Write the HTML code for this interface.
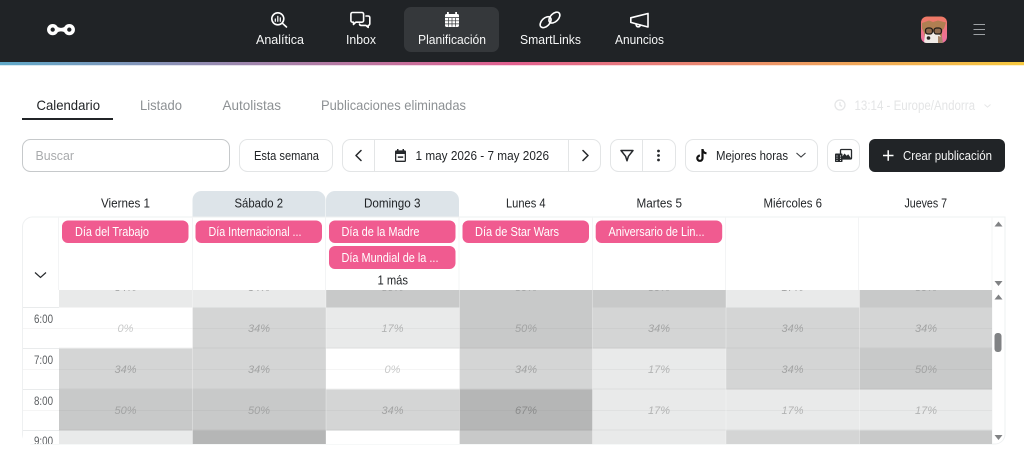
<!DOCTYPE html>
<html><head><meta charset="utf-8"><style>
html,body{margin:0;padding:0;background:#fff;width:1024px;height:454px;overflow:hidden}
svg{display:block}
text{font-family:"Liberation Sans",sans-serif;font-size:13px;fill:#26292c}
.n{font-size:13px;fill:#f6f7f7}
.tab{font-size:14px;fill:#8d9194}
.tb{font-size:12.5px;fill:#1f2225}
.d{font-size:13px;fill:#1f2225}
.p{font-size:13px;fill:#fff}
.pc{font-size:11px;font-style:italic;fill:#a2a3a3;text-anchor:middle}
.t{font-size:11.5px;fill:#5a5d60}
.ln{fill:none;stroke:#fff;stroke-width:1.6;stroke-linecap:round;stroke-linejoin:round}
.ic{fill:none;stroke:#26292c;stroke-width:1.5;stroke-linecap:round;stroke-linejoin:round}
</style></head><body>
<svg width="1024" height="454" viewBox="0 0 1024 454" xmlns="http://www.w3.org/2000/svg">
<defs>
<linearGradient id="g" x1="0" x2="1" y1="0" y2="0"><stop offset="0" stop-color="#5fa9c9"/><stop offset=".5" stop-color="#e2608f"/><stop offset="1" stop-color="#f6c93f"/></linearGradient>
<linearGradient id="av" x1="0" x2="0" y1="0" y2="1"><stop offset="0" stop-color="#ee7a62"/><stop offset="1" stop-color="#ee6fa5"/></linearGradient>
<clipPath id="grid"><rect x="23" y="290" width="969" height="154"/></clipPath>
<clipPath id="avc"><rect x="921" y="16.5" width="26" height="26.5" rx="6"/></clipPath>
</defs>

<!-- Top bar -->
<rect width="1024" height="62" fill="#202326"/>
<rect y="62" width="1024" height="3" fill="url(#g)"/>
<rect y="65" width="1024" height="1" fill="url(#g)" opacity=".25"/>
<!-- logo -->
<g fill="none" stroke="#fff" stroke-width="3.5"><circle cx="52.7" cy="29.6" r="3.9"/><circle cx="69.3" cy="29.6" r="3.9"/></g>
<path d="M56 26.3C60 28.4 62 28.4 66 26.3V32.9C62 30.8 60 30.8 56 32.9z" fill="#fff"/>
<!-- active nav -->
<rect x="404" y="7" width="95" height="45" rx="7" fill="#35383b"/>
<!-- analitica -->
<g class="ln"><circle cx="277.8" cy="18.8" r="6"/><path d="M282.3 23.2L286.5 27"/><path d="M275.3 21.3v-2.3M277.8 21.3v-5M280.3 21.3v-3.5" stroke-width="1.2"/></g>
<!-- inbox -->
<g class="ln"><path d="M352.5 12.5h9.5a1.6 1.6 0 0 1 1.6 1.6v6.5a1.6 1.6 0 0 1-1.6 1.6h-6.2l-2.3 2.2v-2.2h-1a1.6 1.6 0 0 1-1.6-1.6v-6.5a1.6 1.6 0 0 1 1.6-1.6z"/><path d="M366 16h2.2a1.6 1.6 0 0 1 1.6 1.6v6.2a1.6 1.6 0 0 1-1.6 1.6v2l-2.3-2h-4.8a1.6 1.6 0 0 1-1.6-1.4"/></g>
<!-- calendar -->
<path fill="#fff" d="M447 12h1.8v2h6.4v-2h1.8v2h.3a1.7 1.7 0 0 1 1.7 1.7v9.6a1.7 1.7 0 0 1-1.7 1.7h-10.6a1.7 1.7 0 0 1-1.7-1.7v-9.6a1.7 1.7 0 0 1 1.7-1.7h.3z"/>
<g stroke="#35383b" stroke-width=".7"><path d="M445 17.6h14M445 20.8h14M445 23.9h14M448.6 17.6v9M452 17.6v9M455.4 17.6v9"/></g>
<!-- smartlinks -->
<g class="ln"><ellipse cx="545.6" cy="22.2" rx="6.6" ry="4" transform="rotate(-45 545.6 22.2)"/><ellipse cx="554.4" cy="17.6" rx="6.6" ry="4" transform="rotate(-45 554.4 17.6)"/></g>
<!-- anuncios -->
<g class="ln"><path d="M648 13.5v13.5L630.8 22.4v-4.6z"/><path d="M636 24l.3 1.4a2 2 0 0 0 3.9-.3"/></g>
<text class="n" x="256" y="44" textLength="48" lengthAdjust="spacingAndGlyphs">Analítica</text>
<text class="n" x="346" y="44" textLength="30" lengthAdjust="spacingAndGlyphs">Inbox</text>
<text class="n" x="418" y="44" textLength="68" lengthAdjust="spacingAndGlyphs">Planificación</text>
<text class="n" x="520" y="44" textLength="61" lengthAdjust="spacingAndGlyphs">SmartLinks</text>
<text class="n" x="615" y="44" textLength="49" lengthAdjust="spacingAndGlyphs">Anuncios</text>
<!-- avatar -->
<g clip-path="url(#avc)"><rect x="921" y="16" width="27" height="27" fill="url(#av)"/>
<path d="M922 23l7-2.5 4 1.5 5-1.5 8 2-2 6-2 2 0 12h-17l-1-10-2-4z" fill="#b07f52"/>
<path d="M925 34l6-3 3 1 5 2 3 4 0 5h-18z" fill="#efeae6"/>
<path d="M938 36l4 1 1 6h-5z" fill="#a8866a"/>
<g fill="#8f6b4e" stroke="#221d1a" stroke-width="1.3"><rect x="925.5" y="28" width="7" height="6" rx="2.6"/><rect x="934" y="28" width="7.5" height="6" rx="2.6"/></g>
<circle cx="928.5" cy="38" r="1.8" fill="#2a2624"/></g>
<!-- hamburger -->
<path d="M973.5 24.5h11.5M973.5 29.5h11.5M973.5 34.5h11.5" stroke="#9da1a4" stroke-width="1.1"/>

<!-- Tabs -->
<text x="36.5" y="110" class="tab" style="fill:#212427" textLength="63.5" lengthAdjust="spacingAndGlyphs">Calendario</text>
<text x="140" y="110" class="tab" textLength="42" lengthAdjust="spacingAndGlyphs">Listado</text>
<text x="222.5" y="110" class="tab" textLength="58.5" lengthAdjust="spacingAndGlyphs">Autolistas</text>
<text x="321" y="110" class="tab" textLength="145" lengthAdjust="spacingAndGlyphs">Publicaciones eliminadas</text>
<rect x="22" y="118" width="91" height="2" fill="#212427"/>
<g fill="none" stroke="#e5e6e7" stroke-width="1.3"><circle cx="840" cy="105" r="5"/><path d="M840 102v3.2l2 1.2"/><path d="M984.5 104.5l3 2.6 3-2.6" stroke-width="1"/></g>
<text x="854.5" y="110" style="font-size:13.5px;fill:#e4e5e6" textLength="120.5" lengthAdjust="spacingAndGlyphs">13:14 - Europe/Andorra</text>

<!-- Toolbar -->
<g fill="#fff" stroke="#e3e5e6">
<rect x="22.5" y="139.5" width="207" height="32" rx="8" stroke="#c6c9cb"/>
<rect x="239.5" y="139.5" width="93" height="32" rx="8"/>
<rect x="342.5" y="139.5" width="258" height="32" rx="8"/>
<rect x="610.5" y="139.5" width="65" height="32" rx="8"/>
<rect x="685.5" y="139.5" width="132" height="32" rx="8"/>
<rect x="827.5" y="139.5" width="32" height="32" rx="8"/>
</g>
<path d="M374.5 140v31M568.5 140v31M642.5 140v31" stroke="#e3e5e6"/>
<rect x="869" y="139" width="136" height="33" rx="6" fill="#212427"/>
<text x="35.5" y="160" style="fill:#a9abad" textLength="38.5" lengthAdjust="spacingAndGlyphs">Buscar</text>
<text class="tb" x="254" y="160" textLength="65" lengthAdjust="spacingAndGlyphs">Esta semana</text>
<path class="ic" d="M361 150.5l-5 5 5 5M583 150.5l5 5-5 5"/>
<path fill="#26292c" fill-rule="evenodd" d="M397 149h1.5v1.4h4V149h1.5v1.4h.7a1.4 1.4 0 0 1 1.3 1.4v8.8a1.4 1.4 0 0 1-1.3 1.4h-8.4a1.4 1.4 0 0 1-1.3-1.4v-8.8a1.4 1.4 0 0 1 1.3-1.4h.7zM396.3 154v6.6h8.4V154zM397.8 156.4h5.4v1.5h-5.4z"/>
<text class="tb" x="415.5" y="160" textLength="133.5" lengthAdjust="spacingAndGlyphs">1 may 2026 - 7 may 2026</text>
<path class="ic" d="M621 150.5h12l-4.6 5.8-1.4 4.5-1.4-4.5z" stroke-width="1.3"/>
<g fill="#26292c"><circle cx="658.5" cy="151" r="1.4"/><circle cx="658.5" cy="155.5" r="1.4"/><circle cx="658.5" cy="160" r="1.4"/></g>
<path d="M702.5 149v9.2a2.6 2.6 0 1 1-2.6-2.6" fill="none" stroke="#111" stroke-width="2.2"/><path d="M702.5 149.5c.3 2.2 1.8 3.6 4 3.8" fill="none" stroke="#111" stroke-width="2.2"/>
<text class="tb" x="716" y="160" textLength="72" lengthAdjust="spacingAndGlyphs">Mejores horas</text>
<path d="M796.5 153l4.5 4 4.5-4" fill="none" stroke="#3a3d40" stroke-width="1.1"/>
<g><rect x="840.5" y="149.5" width="11" height="9.5" rx="1" fill="#fff" stroke="#26292c" stroke-width="1.3"/><path d="M841 158.5l3.5-5 2.2 2.2 1.5-1.5 3 4.3z" fill="#26292c"/><rect x="835" y="153.5" width="7.5" height="8.5" rx=".8" fill="#26292c"/><path d="M836.5 156h1M836.5 158.2h1M836.5 160.4h1M840 156h1M840 158.2h1M840 160.4h1" stroke="#fff" stroke-width=".9"/></g>
<path d="M883 155.5h10.5M888.2 150.2v10.6" stroke="#fff" stroke-width="1.5"/>
<text x="903" y="160" style="font-size:12.5px;fill:#f4f5f5" textLength="89" lengthAdjust="spacingAndGlyphs">Crear publicación</text>

<!-- Day headers -->
<path d="M192.5 217v-17a9 9 0 0 1 9-9h115a9 9 0 0 1 9 9v17z" fill="#dde4e9"/>
<path d="M326 217v-17a9 9 0 0 1 9-9h115a9 9 0 0 1 9 9v17z" fill="#dde4e9"/>
<text class="d" x="101" y="207.5" textLength="49" lengthAdjust="spacingAndGlyphs">Viernes 1</text>
<text class="d" x="234.5" y="207.5" textLength="48.5" lengthAdjust="spacingAndGlyphs">Sábado 2</text>
<text class="d" x="364" y="207.5" textLength="56.5" lengthAdjust="spacingAndGlyphs">Domingo 3</text>
<text class="d" x="506" y="207.5" textLength="39.5" lengthAdjust="spacingAndGlyphs">Lunes 4</text>
<text class="d" x="636.5" y="207.5" textLength="45.5" lengthAdjust="spacingAndGlyphs">Martes 5</text>
<text class="d" x="763.5" y="207.5" textLength="58.5" lengthAdjust="spacingAndGlyphs">Miércoles 6</text>
<text class="d" x="904.5" y="207.5" textLength="42.5" lengthAdjust="spacingAndGlyphs">Jueves 7</text>

<!-- Table frame -->
<path d="M22.5 434v-207a10 10 0 0 1 10-10H1005V434a10 10 0 0 1-10 10H32.5a10 10 0 0 1-10-10z" fill="#fff" stroke="#eef0f1"/>
<path d="M58.5 217v73M192.5 217v73M325.5 217v73M459 217v73M592.5 217v73M725.5 217v73M858.5 217v73M992 217v227" stroke="#f3f4f5" fill="none"/>

<!-- Event pills -->
<g fill="#f05b90">
<rect x="62" y="220.5" width="126.5" height="22.5" rx="6"/>
<rect x="195.5" y="220.5" width="126.5" height="22.5" rx="6"/>
<rect x="329" y="220.5" width="126.5" height="22.5" rx="6"/>
<rect x="329" y="246" width="126.5" height="23" rx="6"/>
<rect x="462.5" y="220.5" width="126.5" height="22.5" rx="6"/>
<rect x="595.7" y="220.5" width="126.5" height="22.5" rx="6"/>
</g>
<text class="p" x="75" y="236" textLength="74" lengthAdjust="spacingAndGlyphs">Día del Trabajo</text>
<text class="p" x="208.5" y="236" textLength="93" lengthAdjust="spacingAndGlyphs">Día Internacional ...</text>
<text class="p" x="341.5" y="236" textLength="78" lengthAdjust="spacingAndGlyphs">Día de la Madre</text>
<text class="p" x="341.5" y="262" textLength="97" lengthAdjust="spacingAndGlyphs">Día Mundial de la ...</text>
<text class="p" x="475" y="236" textLength="84" lengthAdjust="spacingAndGlyphs">Día de Star Wars</text>
<text class="p" x="608.5" y="236" textLength="96" lengthAdjust="spacingAndGlyphs">Aniversario de Lin...</text>
<text class="d" x="377.5" y="284.5" textLength="30.5" lengthAdjust="spacingAndGlyphs">1 más</text>
<path d="M35 272.5l5.5 5 5.5-5" fill="none" stroke="#26292c" stroke-width="1.2"/>

<!-- Heat grid -->
<g clip-path="url(#grid)">
<rect x="23" y="290" width="36" height="154" fill="#fff"/>
<g>
<!-- row 0 -->
<rect x="59" y="290" width="267" height="17.5" fill="#e9eaea"/>
<rect x="326" y="290" width="400" height="17.5" fill="#c8c9c9"/>
<rect x="726" y="290" width="133.5" height="17.5" fill="#e9eaea"/>
<rect x="859.5" y="290" width="132.5" height="17.5" fill="#c8c9c9"/>
<!-- row 1 -->
<rect x="59" y="307.5" width="133.5" height="41" fill="#fff"/>
<rect x="192.5" y="307.5" width="133.5" height="41" fill="#d4d5d5"/>
<rect x="326" y="307.5" width="133.5" height="41" fill="#e9eaea"/>
<rect x="459.5" y="307.5" width="133" height="41" fill="#c8c9c9"/>
<rect x="592.5" y="307.5" width="399.5" height="41" fill="#d4d5d5"/>
<!-- row 2 -->
<rect x="59" y="348.5" width="267" height="41" fill="#d4d5d5"/>
<rect x="326" y="348.5" width="133.5" height="41" fill="#fff"/>
<rect x="459.5" y="348.5" width="133" height="41" fill="#d4d5d5"/>
<rect x="592.5" y="348.5" width="133.5" height="41" fill="#e9eaea"/>
<rect x="726" y="348.5" width="133.5" height="41" fill="#d4d5d5"/>
<rect x="859.5" y="348.5" width="132.5" height="41" fill="#c8c9c9"/>
<!-- row 3 -->
<rect x="59" y="389.5" width="267" height="41" fill="#c8c9c9"/>
<rect x="326" y="389.5" width="133.5" height="41" fill="#d4d5d5"/>
<rect x="459.5" y="389.5" width="133" height="41" fill="#b5b6b6"/>
<rect x="592.5" y="389.5" width="399.5" height="41" fill="#e9eaea"/>
<!-- row 4 -->
<rect x="59" y="430.5" width="133.5" height="14" fill="#e9eaea"/>
<rect x="192.5" y="430.5" width="133.5" height="14" fill="#b5b6b6"/>
<rect x="326" y="430.5" width="133.5" height="14" fill="#fff"/>
<rect x="459.5" y="430.5" width="133" height="14" fill="#c8c9c9"/>
<rect x="592.5" y="430.5" width="133.5" height="14" fill="#e9eaea"/>
<rect x="726" y="430.5" width="133.5" height="14" fill="#d4d5d5"/>
<rect x="859.5" y="430.5" width="132.5" height="14" fill="#c8c9c9"/>
</g>
<!-- half-hour + hour lines -->
<path d="M23 328.5H992M23 369.5H992M23 410.5H992" stroke="#777" stroke-opacity=".07"/>
<path d="M23 307.5H59M23 348.5H59M23 389.5H59M23 430.5H59" stroke="#e9ebec"/>
<path d="M59 348H992M59 389H992M59 430H992" stroke="#777" stroke-opacity=".1"/>
<path d="M192.5 290V444M326 290V444M459.5 290V444M592.5 290V444M726 290V444M859.5 290V444" stroke="#fff" stroke-opacity=".3"/>
<text class="t" x="34" y="323" textLength="19" lengthAdjust="spacingAndGlyphs">6:00</text>
<text class="t" x="34" y="364" textLength="19" lengthAdjust="spacingAndGlyphs">7:00</text>
<text class="t" x="34" y="405" textLength="19" lengthAdjust="spacingAndGlyphs">8:00</text>
<text class="t" x="34" y="445" textLength="19" lengthAdjust="spacingAndGlyphs">9:00</text>
<g class="pcs">
<text class="pc" x="125.5" y="291">34%</text><text class="pc" x="259" y="291">34%</text><text class="pc" x="392.5" y="291">50%</text><text class="pc" x="526" y="291">50%</text><text class="pc" x="659" y="291">50%</text><text class="pc" x="792.5" y="291">17%</text><text class="pc" x="926" y="291">50%</text>
<text class="pc" x="125.5" y="332" style="fill:#c8c9c9">0%</text><text class="pc" x="259" y="332">34%</text><text class="pc" x="392.5" y="332" style="fill:#b2b3b3">17%</text><text class="pc" x="526" y="332">50%</text><text class="pc" x="659" y="332">34%</text><text class="pc" x="792.5" y="332">34%</text><text class="pc" x="926" y="332">34%</text>
<text class="pc" x="125.5" y="373">34%</text><text class="pc" x="259" y="373">34%</text><text class="pc" x="392.5" y="373" style="fill:#c8c9c9">0%</text><text class="pc" x="526" y="373">34%</text><text class="pc" x="659" y="373" style="fill:#b2b3b3">17%</text><text class="pc" x="792.5" y="373">34%</text><text class="pc" x="926" y="373">50%</text>
<text class="pc" x="125.5" y="414">50%</text><text class="pc" x="259" y="414">50%</text><text class="pc" x="392.5" y="414">34%</text><text class="pc" x="526" y="414" style="fill:#8a8b8b">67%</text><text class="pc" x="659" y="414" style="fill:#b2b3b3">17%</text><text class="pc" x="792.5" y="414" style="fill:#b2b3b3">17%</text><text class="pc" x="926" y="414" style="fill:#b2b3b3">17%</text>
</g>
</g>

<!-- scrollbars -->
<g fill="#808284">
<path d="M994.5 226.5l4-5 4 5z"/>
<path d="M994.5 281h8l-4 5z"/>
<path d="M994.5 299.5l4-5 4 5z"/>
<path d="M994.5 435h8l-4 5z"/>
<rect x="994.5" y="333" width="7" height="19" rx="3"/>
</g>
</svg>
</body></html>
